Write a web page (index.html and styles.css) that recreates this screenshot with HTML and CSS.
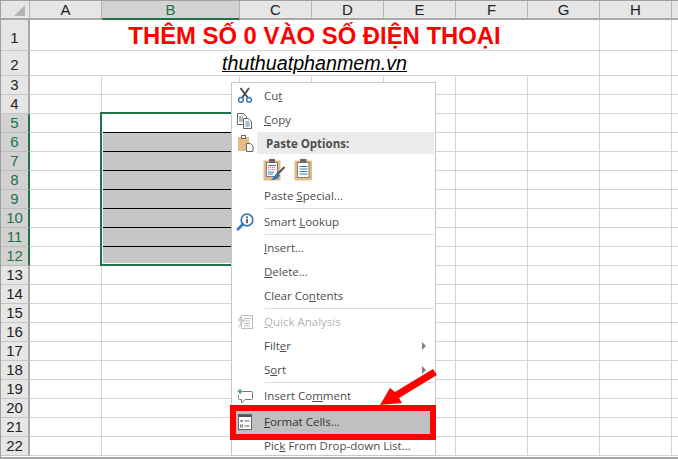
FILE: index.html
```html
<!DOCTYPE html>
<html lang="vi">
<head>
  <meta charset="UTF-8" />
  <title>Format Cells</title>
  <link rel="stylesheet" href="styles.css">
</head>
<body>
  <div class="sheet">
    <table class="grid">
      <colgroup>
        <col class="col-head"><col class="col-std"><col class="col-wide"><col class="col-std"><col class="col-std"><col class="col-std"><col class="col-std"><col class="col-std"><col class="col-std"><col>
      </colgroup>
      <tr class="row-top"><th class="corner"><span class="corner-mark"></span></th><th>A</th><th class="on-top">B</th><th>C</th><th>D</th><th>E</th><th>F</th><th>G</th><th>H</th><th class="last"></th></tr>
      <tr class="row-title"><th class="num">1</th><td colspan="7" class="title">THÊM SỐ 0 VÀO SỐ ĐIỆN THOẠI</td><td></td><td class="last"></td></tr>
      <tr class="row-site"><th class="num">2</th><td colspan="7" class="site">thuthuatphanmem.vn</td><td></td><td class="last"></td></tr>
      <tr><th class="num">3</th><td></td><td></td><td></td><td></td><td></td><td></td><td></td><td></td><td class="last"></td></tr>
      <tr><th class="num">4</th><td></td><td></td><td></td><td></td><td></td><td></td><td></td><td></td><td class="last"></td></tr>
      <tr><th class="num on">5</th><td></td><td class="first-fill"></td><td></td><td></td><td></td><td></td><td></td><td></td><td class="last"></td></tr>
      <tr><th class="num on">6</th><td></td><td class="fill"></td><td></td><td></td><td></td><td></td><td></td><td></td><td class="last"></td></tr>
      <tr><th class="num on">7</th><td></td><td class="fill"></td><td></td><td></td><td></td><td></td><td></td><td></td><td class="last"></td></tr>
      <tr><th class="num on">8</th><td></td><td class="fill"></td><td></td><td></td><td></td><td></td><td></td><td></td><td class="last"></td></tr>
      <tr><th class="num on">9</th><td></td><td class="fill"></td><td></td><td></td><td></td><td></td><td></td><td></td><td class="last"></td></tr>
      <tr><th class="num on">10</th><td></td><td class="fill"></td><td></td><td></td><td></td><td></td><td></td><td></td><td class="last"></td></tr>
      <tr><th class="num on">11</th><td></td><td class="fill"></td><td></td><td></td><td></td><td></td><td></td><td></td><td class="last"></td></tr>
      <tr><th class="num on">12</th><td></td><td class="fill end"></td><td></td><td></td><td></td><td></td><td></td><td></td><td class="last"></td></tr>
      <tr><th class="num">13</th><td></td><td></td><td></td><td></td><td></td><td></td><td></td><td></td><td class="last"></td></tr>
      <tr><th class="num">14</th><td></td><td></td><td></td><td></td><td></td><td></td><td></td><td></td><td class="last"></td></tr>
      <tr><th class="num">15</th><td></td><td></td><td></td><td></td><td></td><td></td><td></td><td></td><td class="last"></td></tr>
      <tr><th class="num">16</th><td></td><td></td><td></td><td></td><td></td><td></td><td></td><td></td><td class="last"></td></tr>
      <tr><th class="num">17</th><td></td><td></td><td></td><td></td><td></td><td></td><td></td><td></td><td class="last"></td></tr>
      <tr><th class="num">18</th><td></td><td></td><td></td><td></td><td></td><td></td><td></td><td></td><td class="last"></td></tr>
      <tr><th class="num">19</th><td></td><td></td><td></td><td></td><td></td><td></td><td></td><td></td><td class="last"></td></tr>
      <tr><th class="num">20</th><td></td><td></td><td></td><td></td><td></td><td></td><td></td><td></td><td class="last"></td></tr>
      <tr><th class="num">21</th><td></td><td></td><td></td><td></td><td></td><td></td><td></td><td></td><td class="last"></td></tr>
      <tr><th class="num">22</th><td></td><td></td><td></td><td></td><td></td><td></td><td></td><td></td><td class="last"></td></tr>
    </table>
    <div class="sheet-end"></div>
  </div>

  <!-- vung chon B5:B12 -->
  <div class="selection"></div>

  <div class="menu">
    <div class="item">
      <span class="icon">
        <svg width="18" height="18" viewBox="0 0 18 18"><path d="M4.500 1l7.500 10M13 1L6 11" fill="none" stroke="#4a4a4a" stroke-width="1.900"/><circle cx="5" cy="12.800" r="2.400" fill="#fff" stroke="#3f7cb5" stroke-width="1.500"/><circle cx="13" cy="12.800" r="2.400" fill="#fff" stroke="#3f7cb5" stroke-width="1.500"/></svg>
      </span>
      <span class="label">Cu<u>t</u></span>
    </div>
    <div class="item">
      <span class="icon">
        <svg width="18" height="18" viewBox="0 0 18 18"><path d="M1.500 2.500h6l3 3v8h-9z" fill="#fff" stroke="#666"/><path d="M3 6h4M3 8h4M3 10h4" stroke="#777"/><path d="M7.500 7.500h5l3 3v7h-8z" fill="#fff" stroke="#666"/><path d="M9.500 11h4M9.500 13h4M9.500 15h4" stroke="#3f7cb5"/></svg>
      </span>
      <span class="label"><u>C</u>opy</span>
    </div>
    <div class="item-head">
      <span class="icon">
        <svg width="18" height="18" viewBox="0 0 18 18"><rect x="2" y="3" width="11" height="14" fill="#e5bd84"/><rect x="5.500" y="1.500" width="4" height="3" fill="#fff" stroke="#666"/><path d="M10.500 9.500h4l2.500 2.500v5.500h-6.500z" fill="#fff" stroke="#666"/></svg>
      </span>
      <span class="head-label">Paste Options:</span>
    </div>
    <div class="paste-row">
      <svg width="22" height="23" viewBox="0 0 22 23"><rect x="0.500" y="2.500" width="17" height="20" rx="1" fill="#e5bd84"/><rect x="3.500" y="4.500" width="11" height="14" fill="#fff" stroke="#7d7d7d"/><rect x="6" y="1" width="6" height="3.500" fill="#666"/><path d="M5 7.500h8" stroke="#3f7cb5"/><path d="M5 9.500h8M5 11.500h8" stroke="#e0524a" stroke-dasharray="1 1"/><path d="M5 14h6M5 16h5" stroke="#3f7cb5"/><path d="M21.500 9l-7 7" stroke="#555" stroke-width="2"/><path d="M14 14.500l3 3-3 3.500-6 1.500z" fill="#2f78bd"/></svg>
      <svg width="19" height="23" viewBox="0 0 19 23"><rect x="0.500" y="2.500" width="17.500" height="20" rx="1" fill="#e5bd84"/><rect x="3.500" y="4.500" width="11.500" height="15" fill="#fff" stroke="#7d7d7d"/><rect x="6" y="1" width="6.500" height="3.500" fill="#666"/><path d="M5.500 8.500h8M5.500 11h8M5.500 13.500h8M5.500 16h8" stroke="#3f7cb5"/></svg>
    </div>
    <div class="item">
      <span class="icon"></span>
      <span class="label">Paste <u>S</u>pecial...</span>
    </div>
    <div class="sep"></div>
    <div class="item">
      <span class="icon">
        <svg width="18" height="18" viewBox="0 0 18 18"><circle cx="11" cy="7" r="5.800" fill="#fff" stroke="#3f7cb5" stroke-width="1.800"/><path d="M6.800 11.200L2 16.200" stroke="#3f7cb5" stroke-width="2.800" stroke-linecap="round"/><path d="M11 6v4.200" stroke="#444" stroke-width="1.600"/><circle cx="11" cy="4.200" r="1" fill="#444"/></svg>
      </span>
      <span class="label">Smart <u>L</u>ookup</span>
    </div>
    <div class="sep"></div>
    <div class="item">
      <span class="icon"></span>
      <span class="label"><u>I</u>nsert...</span>
    </div>
    <div class="item">
      <span class="icon"></span>
      <span class="label"><u>D</u>elete...</span>
    </div>
    <div class="item">
      <span class="icon"></span>
      <span class="label">Clear Co<u>n</u>tents</span>
    </div>
    <div class="sep"></div>
    <div class="item off">
      <span class="icon">
        <svg width="18" height="18" viewBox="0 0 18 18"><path d="M5.500 2.500h11v13h-11z" fill="#fff" stroke="#bdbdbd"/><path d="M8 5.500h6M8 8h6M8 10.500h6M8 13h6" stroke="#bdbdbd"/><path d="M6 1L1.500 8h3L2.500 15.500 9 6.500H6z" fill="#c9c9c9"/></svg>
      </span>
      <span class="label"><u>Q</u>uick Analysis</span>
    </div>
    <div class="item">
      <span class="icon"></span>
      <span class="label">Filt<u>e</u>r</span>
      <span class="more"></span>
    </div>
    <div class="item">
      <span class="icon"></span>
      <span class="label">S<u>o</u>rt</span>
      <span class="more"></span>
    </div>
    <div class="sep"></div>
    <div class="item">
      <span class="icon">
        <svg width="18" height="18" viewBox="0 0 18 18"><path d="M6.500 4.500h9a1 1 0 0 1 1 1v6a1 1 0 0 1-1 1H9L5.500 16v-3.500H3.500a1 1 0 0 1-1-1V8" fill="#fff" stroke="#777"/><path d="M1.500 4.500h5M4 2v5" stroke="#3fa37a" stroke-width="1.600"/></svg>
      </span>
      <span class="label">Insert Co<u>m</u>ment</span>
    </div>
    <div class="gap"></div>
    <div class="item hl">
      <span class="icon">
        <svg width="18" height="18" viewBox="0 0 18 18"><rect x="2.500" y="1.500" width="13" height="15" fill="#fff" stroke="#666"/><rect x="3" y="2" width="12" height="2" fill="#44546a"/><rect x="4.500" y="7" width="2" height="2" fill="#666"/><rect x="4.500" y="12" width="2" height="2" fill="none" stroke="#666" stroke-width="0.800"/><path d="M8.500 8h5M8.500 13h5" stroke="#666"/></svg>
      </span>
      <span class="label"><u>F</u>ormat Cells...</span>
    </div>
    <div class="item">
      <span class="icon"></span>
      <span class="label">Pic<u>k</u> From Drop-down List...</span>
    </div>
  </div>

  <!-- khung do + mui ten -->
  <div class="red-box"></div>
  <svg class="red-arrow" width="65" height="45" viewBox="375 365 65 45"><polygon points="380,405 390,388 395,392 433,369 437,375 399,398 402,403" fill="#ff0000"/></svg>
</body>
</html>
```

FILE: styles.css
```css
html, body {
  margin: 0;
  padding: 0;
  width: 678px;
  height: 459px;
  overflow: hidden;
  background: #fff;
}

.sheet {
  border-top: 1px solid #a0a0a0;
  border-left: 1px solid #a0a0a0;
}

.grid {
  table-layout: fixed;
  width: 677px;
  border-collapse: separate;
  border-spacing: 0;
  font-family: "Liberation Sans", Arial, sans-serif;
}

.col-head { width: 29px; }
.col-std { width: 72px; }
.col-wide { width: 138px; }

.grid tr { height: 19px; }
.grid .row-top { height: 19px; }
.grid .row-title { height: 31px; }
.grid .row-site { height: 25px; }

.grid td {
  padding: 0;
  border-right: 1px solid #d4d4d4;
  border-bottom: 1px solid #d4d4d4;
}

.grid td.last {
  border-right: none;
}

.grid th {
  padding: 0;
  font-weight: normal;
  font-size: 15px;
  line-height: 17px;
  color: #222;
  background: #e6e6e6;
  text-align: center;
  overflow: hidden;
}

.row-top th {
  border-right: 1px solid #b4b4b4;
  border-bottom: 2px solid #a8a8a8;
}

.row-top th.last {
  border-right: none;
}

.row-top th.on-top {
  background: #d2d2d2;
  color: #217346;
  border-bottom-color: #217346;
}

.corner {
  position: relative;
}

.corner-mark {
  position: absolute;
  right: 4px;
  bottom: 2px;
  width: 0;
  height: 0;
  border-left: 11px solid transparent;
  border-bottom: 11px solid #b4b4b4;
}

.grid th.num {
  vertical-align: bottom;
  line-height: 18px;
  border-right: 2px solid #a8a8a8;
  border-bottom: 1px solid #c6c6c6;
}

.row-title th.num {
  padding-bottom: 3px;
}

.row-site th.num {
  padding-bottom: 1px;
}

.grid th.on {
  background: #d2d2d2;
  color: #217346;
  border-right-color: #217346;
  border-bottom-color: #bdbdbd;
}

.title {
  font-size: 23.85px;
  font-weight: bold;
  color: #ff0000;
  text-align: center;
  vertical-align: bottom;
  line-height: 29px;
  white-space: nowrap;
}

.site {
  font-size: 19.7px;
  font-style: italic;
  text-decoration: underline;
  color: #000;
  text-align: center;
  vertical-align: bottom;
  line-height: 23px;
  white-space: nowrap;
}

.grid td.fill {
  background: #c6c6c6;
  border-bottom-color: #000;
}

.grid td.first-fill {
  border-bottom-color: #000;
}

.grid td.end {
  border-bottom-color: #c6c6c6;
}

.sheet-end {
  height: 1px;
  border-bottom: 2px solid #a8a8a8;
}

.selection {
  position: absolute;
  left: 100px;
  top: 112px;
  width: 141px;
  height: 154px;
  box-sizing: border-box;
  border: 2px solid #217346;
  box-shadow: inset 0 0 0 1px #fff;
}

/* context menu */
.menu {
  position: absolute;
  left: 231px;
  top: 82px;
  width: 205px;
  height: 374px;
  box-sizing: border-box;
  border: 1px solid #c6c6c6;
  padding-top: 1px;
  background: #fff;
  overflow: hidden;
  font-family: "Open Sans", sans-serif;
  font-size: 11.5px;
  color: #4d4d4d;
}

.item {
  display: flex;
  align-items: center;
  height: 24px;
  flex-shrink: 0;
}

.icon {
  display: flex;
  align-items: center;
  justify-content: center;
  width: 26px;
  margin-right: 6px;
  flex-shrink: 0;
}

.label {
  flex: 1;
  white-space: nowrap;
  padding-bottom: 2px;
}

.off {
  color: #b4b4b4;
}

.more {
  width: 0;
  height: 0;
  margin-right: 9px;
  border-top: 4px solid transparent;
  border-bottom: 4px solid transparent;
  border-left: 4px solid #808080;
}

.item-head {
  display: flex;
  align-items: center;
  height: 22px;
}

.head-label {
  flex: 1;
  align-self: stretch;
  display: flex;
  align-items: center;
  margin: 0 1px 0 -7px;
  padding-left: 9px;
  background: #ebebeb;
  font-weight: bold;
}

.item-head .icon {
  margin-right: 6px;
}

.paste-row {
  display: flex;
  align-items: center;
  gap: 9px;
  height: 30px;
  padding-left: 31px;
}

.sep {
  height: 1px;
  margin: 0 1px 1px 33px;
  background: #dcdcdc;
}

.gap {
  height: 2px;
}

.hl {
  background: #c0c0c0;
  color: #333;
}

.red-box {
  position: absolute;
  left: 230px;
  top: 405px;
  width: 206px;
  height: 35px;
  box-sizing: border-box;
  border: 6px solid #ff0000;
}

.red-arrow {
  position: absolute;
  left: 375px;
  top: 365px;
}
```
